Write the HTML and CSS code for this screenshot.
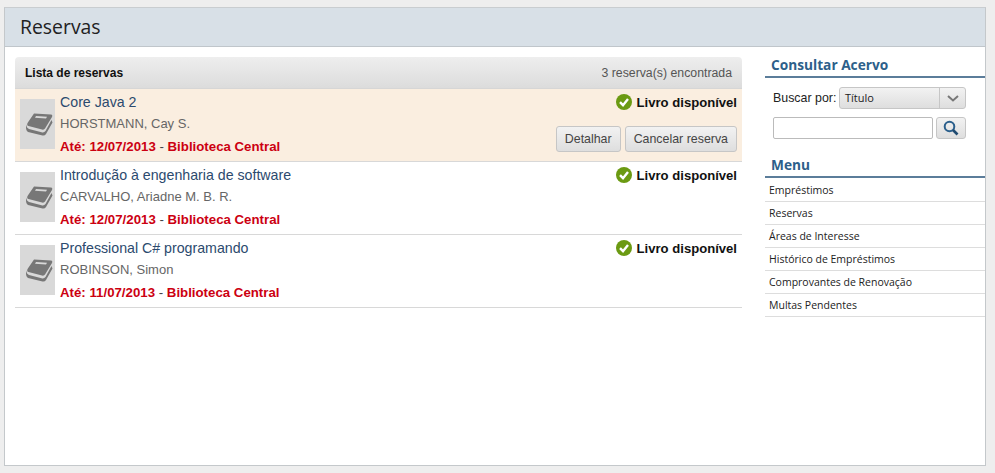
FILE: index.html
```html
<!DOCTYPE html>
<html lang="pt-BR">
<head>
    <meta charset="UTF-8">
    <title>Reservas</title>
    <link rel="stylesheet" href="styles.css">
</head>
<body>
    <svg class="icon-defs" width="0" height="0">
        <symbol id="book" viewBox="0 0 35 50">
            <path d="M14 14.500 L31 15.500 Q33 16 32 18 L25 29.500 Q24 31 22 30.500 L8.500 27 Q6.500 26.500 7.500 24 Z" fill="#777"/>
            <path d="M6.500 25.500 Q5 31 8 33 L22.500 36.500 Q25 36.800 26 35 L32.500 23.500 L31.500 21 L25.500 32 Q24 34 21.500 33.200 L9 30 Q6.500 29 6.500 25.500 Z" fill="#777"/>
            <path d="M16 17 L27 17.800 L26 19.500 L15 18.700 Z" fill="#d9d9d9"/>
        </symbol>
        <symbol id="check" viewBox="0 0 16 16">
            <circle cx="8" cy="8" r="8" fill="#6b9a12"/>
            <path d="M4 8.200 L7 11.200 L12 5" fill="none" stroke="#fff" stroke-width="2.400"/>
        </symbol>
    </svg>

    <div class="page">
        <h1 class="page-title">Reservas</h1>
        <div class="page-body">
            <div class="content">
                <div class="list-head">
                    <strong>Lista de reservas</strong>
                    <span>3 reserva(s) encontrada</span>
                </div>

                <div class="item item-active">
                    <svg class="cover"><use href="#book"/></svg>
                    <div class="item-info">
                        <a class="item-title">Core Java 2</a>
                        <div class="item-author">HORSTMANN, Cay S.</div>
                        <div class="item-due"><b>Até: 12/07/2013</b> - <b>Biblioteca Central</b></div>
                    </div>
                    <div class="item-side">
                        <div class="status"><svg class="check"><use href="#check"/></svg>Livro disponível</div>
                        <div class="actions">
                            <button class="btn">Detalhar</button>
                            <button class="btn">Cancelar reserva</button>
                        </div>
                    </div>
                </div>

                <div class="item">
                    <svg class="cover"><use href="#book"/></svg>
                    <div class="item-info">
                        <a class="item-title">Introdução à engenharia de software</a>
                        <div class="item-author">CARVALHO, Ariadne M. B. R.</div>
                        <div class="item-due"><b>Até: 12/07/2013</b> - <b>Biblioteca Central</b></div>
                    </div>
                    <div class="item-side">
                        <div class="status"><svg class="check"><use href="#check"/></svg>Livro disponível</div>
                    </div>
                </div>

                <div class="item">
                    <svg class="cover"><use href="#book"/></svg>
                    <div class="item-info">
                        <a class="item-title">Professional C# programando</a>
                        <div class="item-author">ROBINSON, Simon</div>
                        <div class="item-due"><b>Até: 11/07/2013</b> - <b>Biblioteca Central</b></div>
                    </div>
                    <div class="item-side">
                        <div class="status"><svg class="check"><use href="#check"/></svg>Livro disponível</div>
                    </div>
                </div>
            </div>

            <div class="sidebar">
                <h2 class="side-title">Consultar Acervo</h2>
                <div class="search">
                    <div class="search-row">
                        <label>Buscar por:</label>
                        <div class="select">
                            <span class="select-text">Título</span>
                            <span class="select-arrow">
                                <svg width="12" height="7" viewBox="0 0 12 7"><path d="M1 1 L6 5.500 L11 1" fill="none" stroke="#777" stroke-width="2"/></svg>
                            </span>
                        </div>
                    </div>
                    <div class="search-row">
                        <input class="search-input" type="text">
                        <button class="search-btn">
                            <svg width="16" height="16" viewBox="0 0 16 16"><circle cx="6.500" cy="6.500" r="4.800" fill="none" stroke="#2b5f8c" stroke-width="2"/><path d="M10 10 L14.500 14.500" stroke="#1f4a70" stroke-width="2.600"/></svg>
                        </button>
                    </div>
                </div>

                <h2 class="side-title">Menu</h2>
                <ul class="menu">
                    <li>Empréstimos</li>
                    <li>Reservas</li>
                    <li>Áreas de Interesse</li>
                    <li>Histórico de Empréstimos</li>
                    <li>Comprovantes de Renovação</li>
                    <li>Multas Pendentes</li>
                </ul>
            </div>
        </div>
    </div>
</body>
</html>
```

FILE: styles.css
```css
* {
    box-sizing: border-box;
}

body {
    margin: 0;
    height: 473px;
    padding: 7px 9px 7px 4px;
    overflow: hidden;
    background-color: #eeeeee;
    font-family: "Liberation Sans", Arial, sans-serif;
    font-size: 12px;
    color: #222;
}

.icon-defs {
    position: absolute;
}

.page {
    height: 459px;
    background-color: #fff;
    border: 1px solid #c4c8cb;
    border-top-color: #c9cdd0;
}

.page-title {
    height: 39px;
    margin: 0;
    padding: 7px 0 0 15px;
    background-color: #d8e0e7;
    border-bottom: 1px solid #c0c6cb;
    font-family: "Open Sans", sans-serif;
    font-size: 19.400px;
    line-height: 24px;
    font-weight: 400;
    color: #222;
}

.page-body {
    display: flex;
    padding: 10px 0 0 10px;
}

.content {
    width: 727px;
}

.list-head {
    display: flex;
    justify-content: space-between;
    align-items: center;
    height: 32px;
    padding: 0 10px;
    background: linear-gradient(#eeeeee, #dcdcdc);
    border-bottom: 1px solid #d6d6d6;
    border-radius: 4px 4px 0 0;
    font-size: 12.300px;
    color: #555;
}

.list-head strong {
    font-size: 12px;
    color: #111;
}

.item {
    display: flex;
    height: 73px;
    padding: 10px 5px 0 5px;
    border-bottom: 1px solid #d8d8d8;
}

.item-active {
    background-color: #faeee0;
}

.cover {
    width: 35px;
    height: 50px;
    flex: none;
    background-color: #d9d9d9;
}

.item-info {
    flex: 1;
    margin-top: -5px;
    padding-left: 5px;
}

.item-title {
    display: block;
    font-size: 14.200px;
    line-height: 16px;
    color: #2c4a6e;
}

.item-author {
    margin-top: 7px;
    font-size: 13px;
    line-height: 14px;
    color: #666;
}

.item-due {
    margin-top: 8px;
    font-size: 13.250px;
    line-height: 15px;
    color: #444;
}

.item-due b {
    color: #cc0011;
}

.item-side {
    display: flex;
    flex-direction: column;
    align-items: flex-end;
    margin-top: -5px;
}

.status {
    display: flex;
    align-items: center;
    gap: 5px;
    height: 16px;
    font-size: 13.100px;
    font-weight: bold;
    color: #111;
}

.check {
    width: 16px;
    height: 16px;
}

.actions {
    display: flex;
    gap: 4px;
    margin-top: 16px;
}

.btn {
    height: 26px;
    padding: 0 8px;
    background: linear-gradient(#f2f2f2, #dedede);
    border: 1px solid #c6c6c6;
    border-radius: 3px;
    font-family: "Liberation Sans", Arial, sans-serif;
    font-size: 12.400px;
    color: #444;
}

.sidebar {
    width: 220px;
    margin-left: 23px;
}

.side-title {
    height: 21px;
    margin: 0;
    padding: 0 0 0 6px;
    border-bottom: 2px solid #5b7d9a;
    font-family: "Open Sans", sans-serif;
    font-size: 13.700px;
    line-height: 15px;
    font-weight: 700;
    color: #2d5f8a;
}

.search {
    display: flex;
    flex-direction: column;
    gap: 8px;
    padding: 9px 19px 18px 8px;
}

.search-row {
    display: flex;
    align-items: center;
    justify-content: space-between;
}

.search-row label {
    font-size: 12.400px;
    color: #222;
}

.select {
    display: flex;
    width: 127px;
    height: 22px;
    background: linear-gradient(#f2f2f2, #dedede);
    border: 1px solid #c6c6c6;
    border-radius: 3px;
}

.select-text {
    flex: 1;
    padding-left: 5px;
    font-family: "Open Sans", sans-serif;
    font-size: 11px;
    line-height: 20px;
    color: #222;
}

.select-arrow {
    display: flex;
    align-items: center;
    justify-content: center;
    width: 26px;
    border-left: 1px solid #c6c6c6;
}

.search-input {
    width: 160px;
    height: 22px;
    padding: 0;
    background-color: #fff;
    border: 1px solid #bbb;
    border-radius: 2px;
}

.search-btn {
    display: flex;
    align-items: center;
    justify-content: center;
    width: 30px;
    height: 22px;
    padding: 0;
    background: linear-gradient(#f2f2f2, #dedede);
    border: 1px solid #c6c6c6;
    border-radius: 3px;
}

.menu {
    margin: 0;
    padding: 1px 0 0;
    list-style: none;
}

.menu li {
    height: 23px;
    padding-left: 4px;
    border-bottom: 1px solid #dddddd;
    font-family: "Open Sans", sans-serif;
    font-size: 10.500px;
    line-height: 22px;
    color: #222;
}
```
